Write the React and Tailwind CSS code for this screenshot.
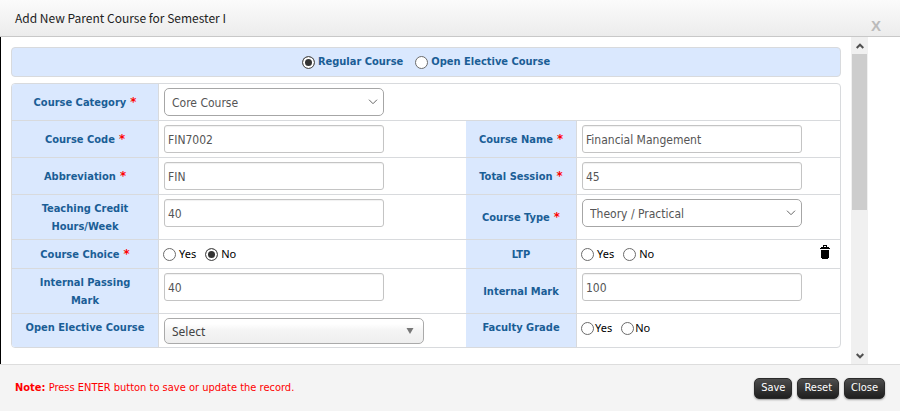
import React, { useState } from 'react';
import clsx from 'clsx';

const Radio = ({ label, name, value, current, onChange, className }) => (
  <label className={clsx('flex items-center', className)}>
    <input
      type="radio"
      name={name}
      value={value}
      checked={current === value}
      onChange={() => onChange(value)}
      className="h-[13px] w-[13px] shrink-0 appearance-none rounded-full border border-[#6b6b6b] bg-white checked:border-[#555] checked:bg-[#333] checked:shadow-[inset_0_0_0_2px_white]"
    />
    <span>{label}</span>
  </label>
);

const YesNo = ({ id, initial = '', tight }) => {
  const [value, setValue] = useState(initial);
  return (
    <div className="-ml-px flex h-5 items-center gap-[9px] font-['Noto_Sans',sans-serif] text-[11px] text-black">
      {['Yes', 'No'].map(v => (
        <Radio key={v} label={v} name={id} value={v} current={value} onChange={setValue} className={tight ? 'gap-px' : 'gap-[3px]'} />
      ))}
    </div>
  );
};

const Label = ({ htmlFor, required, children, className }) => (
  <label
    htmlFor={htmlFor}
    className={clsx('flex items-center justify-center border-r border-[#d8dadd] bg-[#dae8fe] pt-px text-center text-[11px] leading-[18px] font-bold text-[#1a5e96]', className)}
  >
    <span>
      {children}
      {required && <span className="text-[13px] leading-none text-[#f00]"> *</span>}
    </span>
  </label>
);

const TextBox = ({ id, value }) => (
  <input
    id={id}
    type="text"
    defaultValue={value}
    className="block h-7 w-full max-w-[220px] rounded-[3px] border border-[#c4c4c4] bg-white px-[3px] pt-px text-[12px] text-[#555] shadow-[inset_0_1px_1px_rgba(0,0,0,0.06)]"
  />
);

const SelectBox = ({ id, value }) => (
  <div className="relative w-full max-w-[220px]">
    <select id={id} className="block h-7 w-full appearance-none rounded-[5px] border border-[#a6a6a6] bg-white px-[7px] pt-px text-[12px] text-[#555]">
      <option>{value}</option>
    </select>
    <svg className="pointer-events-none absolute top-[11px] right-[6px]" width="10" height="6" viewBox="0 0 10 6" fill="none" stroke="#666">
      <path d="M1 .7 5 4.7 9 .7" />
    </svg>
  </div>
);

const Row = ({ className, children }) => (
  <div className={clsx('grid grid-cols-[147px_minmax(0,307fr)_111px_minmax(0,263fr)] border-b border-[#d8dadd] last:border-b-0', className)}>
    {children}
  </div>
);

const Cell = ({ className, children }) => <div className={clsx('px-[5px] py-1', className)}>{children}</div>;

const FooterButton = ({ children }) => (
  <button
    type="button"
    className="h-[21px] rounded-[5px] border border-[#2b2b2b] bg-linear-to-b from-[#4d4d4d] to-[#1f1f1f] px-[6px] text-[11px] text-white shadow-[0_1px_2px_rgba(0,0,0,0.35)]"
  >
    {children}
  </button>
);

const App = () => {
  const [courseKind, setCourseKind] = useState('regular');

  return (
    <div className="flex min-h-screen flex-col bg-white font-['DejaVu_Sans_Condensed','DejaVu_Sans',sans-serif]">
      <header className="flex h-[37px] items-center justify-between border-b border-[#c8c8c8] bg-linear-to-b from-[#fbfbfb] to-[#ececec] pr-[19px] pl-[15px]">
        <h1 className="font-['Noto_Sans_CJK_SC',sans-serif] text-[12px] text-[#222]">Add New Parent Course for Semester I</h1>
        <button type="button" aria-label="Close dialog" className="self-end font-['Liberation_Sans',sans-serif] text-[15px] leading-5 font-bold text-[#bbb]">
          X
        </button>
      </header>

      <main className="flex flex-1 border-l border-black">
        <div className="min-w-0 flex-1 p-[10px]">
          <div className="flex h-[30px] items-center justify-center gap-3 rounded-[4px] border border-[#d8dadd] bg-[#dae8fe] pt-px text-[11px] font-bold text-[#1a5e96]">
            <Radio label="Regular Course" name="kind" value="regular" current={courseKind} onChange={setCourseKind} className="gap-[3px]" />
            <Radio label="Open Elective Course" name="kind" value="open" current={courseKind} onChange={setCourseKind} className="gap-[3px]" />
          </div>

          <form className="mt-[6px] overflow-hidden rounded-[4px] border border-[#d8dadd]">
            <Row className="h-[37px]">
              <Label htmlFor="category" required>Course Category</Label>
              <Cell><SelectBox id="category" value="Core Course" /></Cell>
            </Row>
            <Row className="h-[37px]">
              <Label htmlFor="code" required>Course Code</Label>
              <Cell><TextBox id="code" value="FIN7002" /></Cell>
              <Label htmlFor="name" required>Course Name</Label>
              <Cell><TextBox id="name" value="Financial Mangement" /></Cell>
            </Row>
            <Row className="h-[37px]">
              <Label htmlFor="abbr" required>Abbreviation</Label>
              <Cell><TextBox id="abbr" value="FIN" /></Cell>
              <Label htmlFor="session" required>Total Session</Label>
              <Cell><TextBox id="session" value="45" /></Cell>
            </Row>
            <Row className="h-[45px]">
              <Label htmlFor="credit" className="px-4">Teaching Credit Hours/Week</Label>
              <Cell><TextBox id="credit" value="40" /></Cell>
              <Label htmlFor="type" required>Course Type</Label>
              <Cell><SelectBox id="type" value="Theory / Practical" /></Cell>
            </Row>
            <Row className="h-[29px]">
              <Label required>Course Choice</Label>
              <Cell><YesNo id="choice" initial="No" /></Cell>
              <Label>LTP</Label>
              <Cell className="flex justify-between">
                <YesNo id="ltp" />
                <button type="button" aria-label="Delete" className="mr-[5px] h-4">
                  <svg width="10" height="15" viewBox="0 0 10 15" shapeRendering="crispEdges">
                    <path d="M3 0h4v2h2v1h1v1H0V3h1V2h2zM4 1v1h2V1zM1 5h8v8H8v1H2v-1H1z" fillRule="evenodd" />
                  </svg>
                </button>
              </Cell>
            </Row>
            <Row className="h-[45px]">
              <Label htmlFor="passing" className="px-4">Internal Passing Mark</Label>
              <Cell><TextBox id="passing" value="40" /></Cell>
              <Label htmlFor="mark">Internal Mark</Label>
              <Cell><TextBox id="mark" value="100" /></Cell>
            </Row>
            <Row className="h-[33px]">
              <Label htmlFor="elective" className="pb-[7px]">Open Elective Course</Label>
              <Cell>
                <div className="relative w-full max-w-[260px]">
                  <select
                    id="elective"
                    className="block h-[26px] w-full appearance-none rounded-[5px] border border-[#aaa] bg-linear-to-b from-white from-20% via-[#f4f4f4] via-50% to-[#eee] px-[7px] pt-px font-['Noto_Sans',sans-serif] text-[12px] text-[#444]"
                  >
                    <option>Select</option>
                  </select>
                  <svg className="pointer-events-none absolute top-[10px] right-[10px]" width="8" height="6" viewBox="0 0 8 6" fill="#777">
                    <path d="M.5 0h7L4 6z" />
                  </svg>
                </div>
              </Cell>
              <Label className="pb-[7px]">Faculty Grade</Label>
              <Cell><YesNo id="faculty" tight /></Cell>
            </Row>
          </form>
        </div>

        {/* scroll bar of the form area */}
        <div className="mr-8 flex w-[17px] flex-col items-center bg-[#f0f0f0]">
          <div className="flex h-[17px] items-center">
            <svg width="8" height="6" viewBox="0 0 8 6" fill="none" stroke="#505050" strokeWidth="2">
              <path d="M.7 5 4 1.7 7.3 5" />
            </svg>
          </div>
          <div className="h-[156px] w-[15px] bg-[#cdcdcd]" />
          <div className="flex-1" />
          <div className="flex h-[17px] items-center">
            <svg width="8" height="6" viewBox="0 0 8 6" fill="none" stroke="#505050" strokeWidth="2">
              <path d="M.7 1 4 4.3 7.3 1" />
            </svg>
          </div>
        </div>
      </main>

      <footer className="flex h-[47px] items-center justify-between border-t border-[#ddd] bg-[#f4f4f4] px-[15px] pt-px">
        <p className="text-[11px] text-[#f00]">
          <b>Note:</b> Press ENTER button to save or update the record.
        </p>
        <div className="flex gap-[5px]">
          <FooterButton>Save</FooterButton>
          <FooterButton>Reset</FooterButton>
          <FooterButton>Close</FooterButton>
        </div>
      </footer>
    </div>
  );
};

export default App;
